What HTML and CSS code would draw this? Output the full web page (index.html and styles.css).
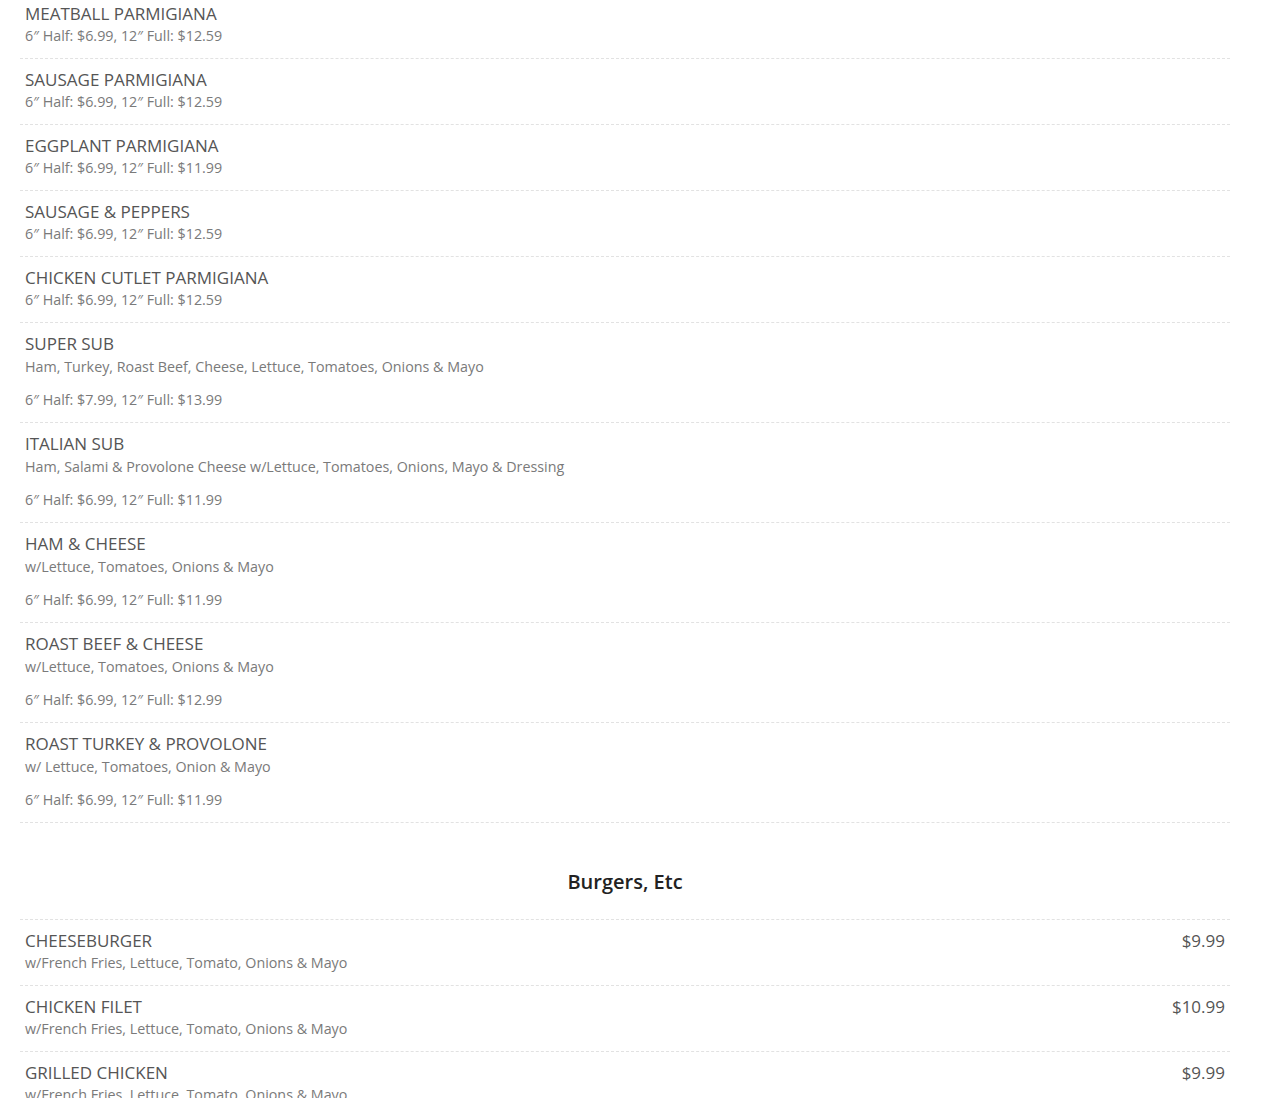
FILE: index.html
```html
<!DOCTYPE html>
<html lang="en">
<head>
    <meta charset="UTF-8">
    <meta name="viewport" content="width=device-width, initial-scale=1.0">
    <title>Menu</title>
    <link rel="stylesheet" href="styles.css">
</head>
<body>
    <div class="menu-list menu-list-first">
        <div class="menu-item">
            <div class="item-head"><span class="item-title">MEATBALL PARMIGIANA</span></div>
            <p class="item-price-line">6″ Half: $6.99, 12″ Full: $12.59</p>
        </div>
        <div class="menu-item">
            <div class="item-head"><span class="item-title">SAUSAGE PARMIGIANA</span></div>
            <p class="item-price-line">6″ Half: $6.99, 12″ Full: $12.59</p>
        </div>
        <div class="menu-item">
            <div class="item-head"><span class="item-title">EGGPLANT PARMIGIANA</span></div>
            <p class="item-price-line">6″ Half: $6.99, 12″ Full: $11.99</p>
        </div>
        <div class="menu-item">
            <div class="item-head"><span class="item-title">SAUSAGE &amp; PEPPERS</span></div>
            <p class="item-price-line">6″ Half: $6.99, 12″ Full: $12.59</p>
        </div>
        <div class="menu-item">
            <div class="item-head"><span class="item-title">CHICKEN CUTLET PARMIGIANA</span></div>
            <p class="item-price-line">6″ Half: $6.99, 12″ Full: $12.59</p>
        </div>
        <div class="menu-item">
            <div class="item-head"><span class="item-title">SUPER SUB</span></div>
            <p class="item-desc">Ham, Turkey, Roast Beef, Cheese, Lettuce, Tomatoes, Onions &amp; Mayo</p>
            <p class="item-price-line spaced">6″ Half: $7.99, 12″ Full: $13.99</p>
        </div>
        <div class="menu-item">
            <div class="item-head"><span class="item-title">ITALIAN SUB</span></div>
            <p class="item-desc">Ham, Salami &amp; Provolone Cheese w/Lettuce, Tomatoes, Onions, Mayo &amp; Dressing</p>
            <p class="item-price-line spaced">6″ Half: $6.99, 12″ Full: $11.99</p>
        </div>
        <div class="menu-item">
            <div class="item-head"><span class="item-title">HAM &amp; CHEESE</span></div>
            <p class="item-desc">w/Lettuce, Tomatoes, Onions &amp; Mayo</p>
            <p class="item-price-line spaced">6″ Half: $6.99, 12″ Full: $11.99</p>
        </div>
        <div class="menu-item">
            <div class="item-head"><span class="item-title">ROAST BEEF &amp; CHEESE</span></div>
            <p class="item-desc">w/Lettuce, Tomatoes, Onions &amp; Mayo</p>
            <p class="item-price-line spaced">6″ Half: $6.99, 12″ Full: $12.99</p>
        </div>
        <div class="menu-item">
            <div class="item-head"><span class="item-title">ROAST TURKEY &amp; PROVOLONE</span></div>
            <p class="item-desc">w/ Lettuce, Tomatoes, Onion &amp; Mayo</p>
            <p class="item-price-line spaced">6″ Half: $6.99, 12″ Full: $11.99</p>
        </div>
    </div>

    <div class="menu-section">
        <h2 class="menu-section-title">Burgers, Etc</h2>
        <div class="menu-list-bordered">
            <div class="menu-item">
                <div class="item-head">
                    <span class="item-title">CHEESEBURGER</span>
                    <span class="item-price">$9.99</span>
                </div>
                <p class="item-price-line">w/French Fries, Lettuce, Tomato, Onions &amp; Mayo</p>
            </div>
            <div class="menu-item">
                <div class="item-head">
                    <span class="item-title">CHICKEN FILET</span>
                    <span class="item-price">$10.99</span>
                </div>
                <p class="item-price-line">w/French Fries, Lettuce, Tomato, Onions &amp; Mayo</p>
            </div>
            <div class="menu-item">
                <div class="item-head">
                    <span class="item-title">GRILLED CHICKEN</span>
                    <span class="item-price">$9.99</span>
                </div>
                <p class="item-price-line">w/French Fries, Lettuce, Tomato, Onions &amp; Mayo</p>
            </div>
        </div>
    </div>
</body>
</html>
```

FILE: styles.css
```css
body {
    font-family: "Open Sans", "Liberation Sans", sans-serif;
    margin: 0;
    background-color: #fff;
    color: #555;
}

.menu-list,
.menu-section {
    margin: 0 40px 0 20px;
}

.menu-list-first {
    margin-top: -7px;
}

.menu-list-bordered {
    border-top: 1px dashed #e2e2e2;
}

.menu-item {
    padding: 9px 5px 12px;
    border-bottom: 1px dashed #e2e2e2;
}

.item-head {
    display: flex;
    justify-content: space-between;
    align-items: center;
}

.item-title,
.item-price {
    font-size: 17px;
    line-height: 24px;
    color: #555;
}

.item-desc,
.item-price-line {
    margin: 0;
    font-size: 14.3px;
    line-height: 20px;
    color: #7a7a7a;
}

.item-desc {
    line-height: 21px;
}

    .item-price-line.spaced {
        margin-top: 13px;
    }

.menu-section-title {
    margin: 0;
    padding: 44px 0 22px;
    text-align: center;
    font-size: 20px;
    font-weight: 600;
    line-height: 30px;
    color: #222;
}
```
